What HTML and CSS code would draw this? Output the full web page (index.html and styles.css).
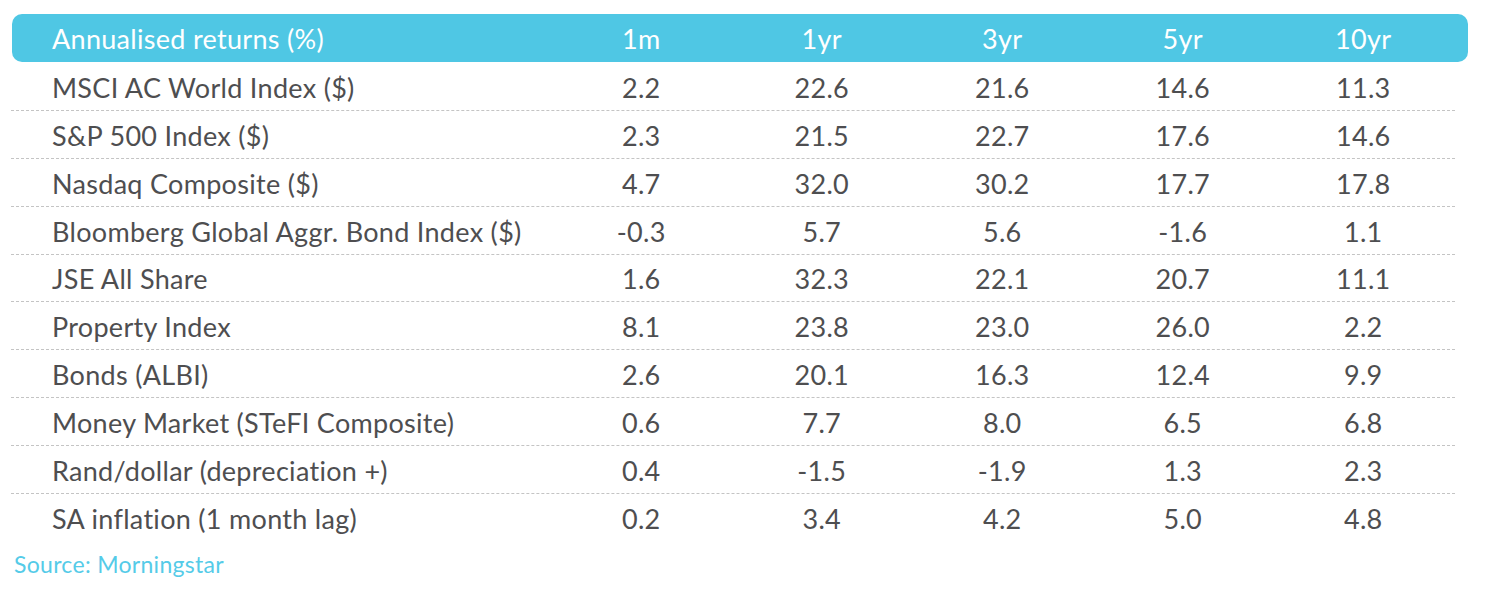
FILE: index.html
```html
<!DOCTYPE html>
<html>
<head>
<meta charset="utf-8">
<link rel="stylesheet" href="styles.css">
</head>
<body>
<div class="wrap">
  <div class="head">
    <div class="label">Annualised returns (%)</div>
    <div class="num">1m</div><div class="num">1yr</div><div class="num">3yr</div><div class="num">5yr</div><div class="num">10yr</div>
  </div>
  <div class="rows">
    <div class="row"><div class="label">MSCI AC World Index ($)</div><div class="num">2.2</div><div class="num">22.6</div><div class="num">21.6</div><div class="num">14.6</div><div class="num">11.3</div></div>
    <div class="row"><div class="label">S&amp;P 500 Index ($)</div><div class="num">2.3</div><div class="num">21.5</div><div class="num">22.7</div><div class="num">17.6</div><div class="num">14.6</div></div>
    <div class="row"><div class="label">Nasdaq Composite ($)</div><div class="num">4.7</div><div class="num">32.0</div><div class="num">30.2</div><div class="num">17.7</div><div class="num">17.8</div></div>
    <div class="row"><div class="label">Bloomberg Global Aggr. Bond Index ($)</div><div class="num">-0.3</div><div class="num">5.7</div><div class="num">5.6</div><div class="num">-1.6</div><div class="num">1.1</div></div>
    <div class="row"><div class="label">JSE All Share</div><div class="num">1.6</div><div class="num">32.3</div><div class="num">22.1</div><div class="num">20.7</div><div class="num">11.1</div></div>
    <div class="row"><div class="label">Property Index</div><div class="num">8.1</div><div class="num">23.8</div><div class="num">23.0</div><div class="num">26.0</div><div class="num">2.2</div></div>
    <div class="row"><div class="label">Bonds (ALBI)</div><div class="num">2.6</div><div class="num">20.1</div><div class="num">16.3</div><div class="num">12.4</div><div class="num">9.9</div></div>
    <div class="row"><div class="label">Money Market (STeFI Composite)</div><div class="num">0.6</div><div class="num">7.7</div><div class="num">8.0</div><div class="num">6.5</div><div class="num">6.8</div></div>
    <div class="row"><div class="label">Rand/dollar (depreciation +)</div><div class="num">0.4</div><div class="num">-1.5</div><div class="num">-1.9</div><div class="num">1.3</div><div class="num">2.3</div></div>
    <div class="row last"><div class="label">SA inflation (1 month lag)</div><div class="num">0.2</div><div class="num">3.4</div><div class="num">4.2</div><div class="num">5.0</div><div class="num">4.8</div></div>
  </div>
  <div class="source">Source: Morningstar</div>
</div>
</body>
</html>
```
FILE: styles.css
```css
html, body {
  margin: 0;
  padding: 0;
  background: #ffffff;
}
.wrap {
  padding: 14px 0 0 11px;
  font-family: "Lato", "Open Sans", sans-serif;
  color: #4e4e50;
  letter-spacing: 0.3px;
}
.head {
  margin-left: 1px;
  width: 1456px;
  height: 48px;
  background: #4fc7e4;
  border-radius: 10px;
  color: #ffffff;
  display: grid;
  grid-template-columns: 539px repeat(5, 180.5px);
  align-items: center;
  font-size: 27px;
}
.head .label {
  padding-left: 40px;
}
.rows {
  margin-top: 1px;
  width: 1444px;
}
.row {
  display: grid;
  grid-template-columns: 540px repeat(5, 180.5px);
  align-items: center;
  height: 46.875px;
  border-bottom: 1px dashed #c4c4c4;
  font-size: 27px;
}
.row .label,
.row .num {
  padding-top: 2px;
}
.row.last {
  border-bottom: none;
}
.row .label {
  padding-left: 41px;
}
.num {
  text-align: center;
}
.source {
  margin-top: 9px;
  padding-left: 3px;
  font-size: 23px;
  color: #55cbe8;
}
```
